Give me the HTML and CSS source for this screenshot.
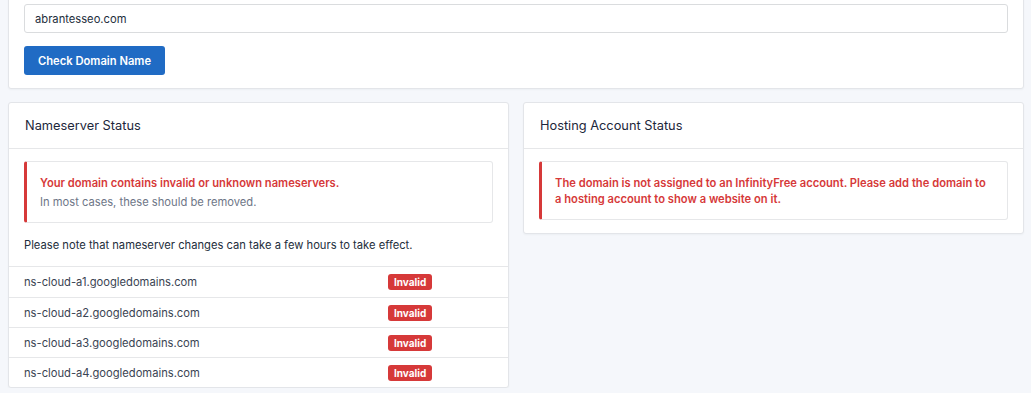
FILE: index.html
```html
<!DOCTYPE html>
<html>
<head>
  <meta charset="UTF-8">
  <title>Domain Checker</title>
  <link rel="stylesheet" href="styles.css">
</head>
<body>
  <div class="page">
    <!-- Domain form -->
    <div class="card card-form">
      <div class="card-body">
        <input class="form-control" type="text" value="abrantesseo.com">
        <button class="btn btn-primary">Check Domain Name</button>
      </div>
    </div>

    <div class="row">
      <!-- Nameservers -->
      <div class="card">
        <div class="card-header">Nameserver Status</div>
        <div class="card-body">
          <div class="alert">
            <div class="alert-title">Your domain contains invalid or unknown nameservers.</div>
            <div class="alert-text">In most cases, these should be removed.</div>
          </div>
          <p class="note">Please note that nameserver changes can take a few hours to take effect.</p>
        </div>
        <div class="ns-table">
          <div class="ns-row"><span>ns-cloud-a1.googledomains.com</span><span class="badge">Invalid</span></div>
          <div class="ns-row"><span>ns-cloud-a2.googledomains.com</span><span class="badge">Invalid</span></div>
          <div class="ns-row"><span>ns-cloud-a3.googledomains.com</span><span class="badge">Invalid</span></div>
          <div class="ns-row"><span>ns-cloud-a4.googledomains.com</span><span class="badge">Invalid</span></div>
        </div>
      </div>

      <!-- Hosting account -->
      <div class="card">
        <div class="card-header">Hosting Account Status</div>
        <div class="card-body">
          <div class="alert">
            <div class="alert-title">The domain is not assigned to an InfinityFree account. Please add the domain to a hosting account to show a website on it.</div>
          </div>
        </div>
      </div>
    </div>
  </div>
</body>
</html>
```

FILE: styles.css
```css
* {
  box-sizing: border-box;
}

html, body {
  margin: 0;
  padding: 0;
  background: #f5f7fb;
  font-family: Inter, "Noto Sans", sans-serif;
  font-size: 11.2px;
  color: #232e3c;
}

.page {
  padding: 0 7px 0 8px;
  margin-top: -12px;
}

.card {
  background: #fff;
  border: 1px solid #e3e5e9;
  border-radius: 3px;
  box-shadow: 0 1px 2px rgba(30, 41, 59, 0.04);
}

.card-form {
  margin-bottom: 13px;
}

.card-form .card-body {
  padding: 15px 15px 13px;
  display: flex;
  flex-direction: column;
  align-items: flex-start;
  gap: 13px;
}

.form-control {
  width: 100%;
  height: 29px;
  padding: 0 10px;
  border: 1px solid #dadcde;
  border-radius: 3px;
  font-family: inherit;
  font-size: 11.2px;
  color: #232e3c;
  background: #fff;
}

.btn {
  height: 29px;
  padding: 0 14px;
  border: 0;
  border-radius: 3px;
  font-family: inherit;
  font-size: 11.2px;
  font-weight: 600;
}

.btn-primary {
  background: #206bc4;
  color: #fff;
}

.row {
  display: grid;
  grid-template-columns: 501px 1fr;
  gap: 14px;
  align-items: start;
}

.card-header {
  height: 46px;
  padding: 0 16px;
  display: flex;
  align-items: center;
  border-bottom: 1px solid #e6e7e9;
  font-size: 12.8px;
  color: #1d273b;
}

.card-body {
  padding: 12px 15px 13px;
}

.alert {
  border: 1px solid #e6e7e9;
  border-left: 3px solid #d63939;
  border-radius: 3px;
  padding: 13px 13px 12px;
  line-height: 16px;
}

.alert-title {
  color: #d63939;
  font-weight: 600;
}

.alert-text {
  color: #6e7687;
  margin-top: 3px;
}

.note {
  margin: 14px 0 0;
  line-height: 16px;
}

.ns-table {
  border-top: 1px solid #e6e7e9;
}

.ns-row {
  height: 30px;
  padding: 0 15px;
  display: grid;
  grid-template-columns: 364px auto;
  align-items: center;
  justify-items: start;
  color: #3a4453;
  border-top: 1px solid #e6e7e9;
}

.ns-row:first-child {
  border-top: 0;
}

.badge {
  background: #d63939;
  color: #fff;
  font-size: 10px;
  font-weight: 700;
  padding: 0 6px;
  height: 16px;
  line-height: 16px;
  border-radius: 3px;
}
```
